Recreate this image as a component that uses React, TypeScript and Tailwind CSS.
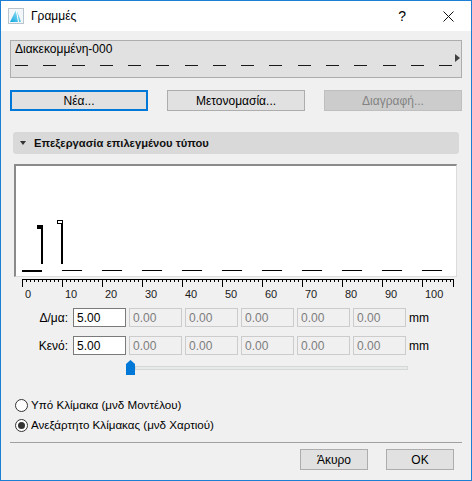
import React from "react";

const FONT = "font-['Liberation_Sans','Noto_Sans',sans-serif]";

function TitleIcon() {
  return (
    <svg width="16" height="16" viewBox="0 0 16 16">
      <defs>
        <linearGradient id="ig" x1="0" y1="1" x2="1" y2="0">
          <stop offset="0" stopColor="#0aa6e0" />
          <stop offset="1" stopColor="#b8ecf8" />
        </linearGradient>
      </defs>
      <rect x="0.5" y="0.5" width="15" height="15" fill="#f4f7f9" stroke="#b9c4cc" />
      <path d="M2 14 L8 2 C10 5 12 10 13 14 Z" fill="url(#ig)" />
      <path d="M8 2 C9 6 10 10 10.5 14" stroke="#ffffff" strokeWidth="1" fill="none" />
    </svg>
  );
}

function Btn({ label, className }: { label: string; className: string }) {
  return (
    <div className={`h-[21px] w-[138px] flex items-center justify-center text-[12px] ${className}`}>
      {label}
    </div>
  );
}

function Field({ value, active }: { value: string; active?: boolean }) {
  return (
    <div
      className={`w-[53px] h-[19px] flex items-center pl-[3px] text-[12px] border ${
        active ? "bg-white border-[#7a7a7a] text-black" : "bg-[#f0f0f0] border-[#cccccc] text-[#7d7d7d]"
      }`}
    >
      {value}
    </div>
  );
}

function Row({ label, mt }: { label: string; mt: string }) {
  return (
    <div className={`flex items-center h-[19px] ${mt}`}>
      <div className="w-[58px] text-right text-[12px] text-black">{label}</div>
      <div className="ml-[5px] flex gap-[3px]">
        <Field value="5.00" active />
        <Field value="0.00" />
        <Field value="0.00" />
        <Field value="0.00" />
        <Field value="0.00" />
        <Field value="0.00" />
      </div>
      <div className="ml-[3px] text-[12px] text-black">mm</div>
    </div>
  );
}

function Radio({ label, checked }: { label: string; checked?: boolean }) {
  return (
    <div className="flex items-center h-[20px] pl-[5px]">
      <div className="w-[13px] h-[13px] rounded-full border border-[#333333] bg-white flex items-center justify-center">
        {checked && <div className="w-[7px] h-[7px] rounded-full bg-[#333333]" />}
      </div>
      <span className="ml-[3px] text-[11.6px] text-black">{label}</span>
    </div>
  );
}

export default function App() {
  const topDashes = Array.from({ length: 16 }, (_, i) => 4 + i * 28.27);
  const prevDashes = Array.from({ length: 10 }, (_, i) => 46 + i * 40);
  const majors = Array.from({ length: 11 }, (_, i) => 8 + i * 40);
  const minors = Array.from({ length: 108 }, (_, i) => 8 + i * 4);

  return (
    <div className={`w-[472px] h-[481px] border border-[#1b7fd4] bg-[#f0f0f0] flex flex-col ${FONT}`}>
      {/* Title bar */}
      <div className="h-[30px] bg-white flex items-center pl-[7px] shrink-0">
        <TitleIcon />
        <span className="ml-[7px] text-[12px] text-black">Γραμμές</span>
        <span className="ml-auto text-[14px] text-black">?</span>
        <svg className="ml-[37px] mr-[17px]" width="11" height="11" viewBox="0 0 11 11">
          <path d="M0.5 0.5 L10.5 10.5 M10.5 0.5 L0.5 10.5" stroke="#111" strokeWidth="1" />
        </svg>
      </div>

      {/* Body */}
      <div className="flex-1 px-[9px] flex flex-col">
        {/* Line type box */}
        <div className="relative mt-[9px] h-[38px] w-[452px] border border-[#adadad] bg-[#e1e1e1]">
          <div className="pl-[4px] pt-[1px] leading-[15px] text-[12px] text-black">Διακεκομμένη-000</div>
          <svg className="absolute left-0 top-0" width="450" height="36" viewBox="0 0 450 36">
            {topDashes.map((x, i) => (
              <rect key={i} x={Math.round(x)} y="24" width="13" height="1" fill="#1a1a1a" />
            ))}
            <polygon points="444,13 449,17 444,21" fill="#404040" />
          </svg>
        </div>

        {/* Buttons */}
        <div className="mt-[12px] flex gap-[19px]">
          <Btn label="Νέα..." className="bg-[#e1e1e1] border-2 border-[#0078d7] text-black" />
          <Btn label="Μετονομασία..." className="bg-[#e1e1e1] border border-[#adadad] text-black" />
          <Btn label="Διαγραφή..." className="bg-[#cccccc] border border-[#bfbfbf] text-[#838383]" />
        </div>

        {/* Section header */}
        <div className="mt-[21px] ml-[3px] w-[446px] h-[22px] rounded-[3px] bg-[#d9d9d9] flex items-center pl-[7px]">
          <svg width="6" height="4" viewBox="0 0 6 4">
            <polygon points="0,0 6,0 3,4" fill="#333333" />
          </svg>
          <span className="ml-[8px] text-[11.2px] font-bold text-[#111111]">Επεξεργασία επιλεγμένου τύπου</span>
        </div>

        {/* Preview */}
        <div className="mt-[10px] ml-[4px] w-[443px] h-[113px] bg-white border-t-2 border-l-2 border-[#8a8a8a] border-r border-b border-r-[#dcdcdc] border-b-[#dcdcdc]">
          <svg width="440" height="110" viewBox="0 0 440 110">
            <rect x="6" y="104" width="20" height="2" fill="#000" />
            <rect x="21" y="59" width="6" height="4" fill="#000" />
            <rect x="25" y="63" width="2" height="35" fill="#000" />
            <rect x="41.5" y="54.5" width="5" height="3" fill="#fff" stroke="#000" strokeWidth="1" />
            <rect x="45" y="58" width="2" height="40" fill="#000" />
            {prevDashes.map((x, i) => (
              <rect key={i} x={x} y="104" width="20" height="1" fill="#000" />
            ))}
          </svg>
        </div>

        {/* Ruler */}
        <svg className="ml-[4px]" width="450" height="23" viewBox="0 0 450 23">
          <rect x="8" y="2" width="432" height="1" fill="#000" />
          {minors.map((x, i) => (
            <rect key={i} x={x} y="2" width="1" height="3" fill="#000" />
          ))}
          {majors.map((x, i) => (
            <rect key={i} x={x} y="2" width="1" height="8" fill="#000" />
          ))}
          <rect x="439" y="2" width="1" height="8" fill="#000" />
          {majors.map((x, i) => (
            <text key={i} x={x + 3} y="21" fontSize="11" fill="#1a1a1a" fontFamily="Liberation Sans, sans-serif">
              {i * 10}
            </text>
          ))}
        </svg>

        <Row label="Δ/μα:" mt="mt-[8px]" />
        <Row label="Κενό:" mt="mt-[9px]" />

        {/* Slider */}
        <div className="mt-[5px] ml-[116px] flex items-center h-[15px]">
          <svg width="9" height="15" viewBox="0 0 9 15">
            <polygon points="0,4 4.5,0 9,4 9,15 0,15" fill="#0078d7" />
          </svg>
          <div className="w-[273px] h-[4px] bg-[#e7eaea] border border-[#d6d6d6]" />
        </div>

        {/* Radios */}
        <div className="mt-[20px] flex flex-col">
          <Radio label="Υπό Κλίμακα (μνδ Μοντέλου)" />
          <Radio label="Ανεξάρτητο Κλίμακας (μνδ Χαρτιού)" checked />
        </div>

        <div className="mt-[7px] w-[452px] h-px bg-[#a0a0a0]" />

        <div className="mt-[6px] flex justify-end gap-[18px] w-[444px]">
          <div className="w-[68px] h-[21px] bg-[#e1e1e1] border border-[#adadad] flex items-center justify-center text-[12px] text-black">
            Άκυρο
          </div>
          <div className="w-[68px] h-[21px] bg-[#e1e1e1] border border-[#adadad] flex items-center justify-center text-[12px] text-black">
            OK
          </div>
        </div>
      </div>
    </div>
  );
}
